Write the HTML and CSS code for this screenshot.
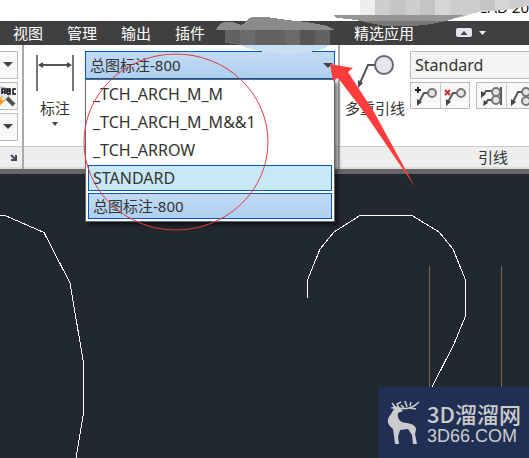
FILE: index.html
```html
<!DOCTYPE html>
<html lang="zh-CN">
<head>
<meta charset="utf-8">
<title>CAD</title>
<link rel="stylesheet" href="styles.css">
</head>
<body>
<div class="app">
  <header class="titlebar"><span>TCAD 20</span></header>
  <nav class="menubar">
    <a href="#">视图</a><a href="#">管理</a><a href="#">输出</a><a href="#">插件</a>
    <a href="#" class="featured">精选应用</a>
    <button class="collapse" aria-label="折叠功能区"><svg width="32" height="12" viewBox="0 0 32 12"><rect x="1" y="1" width="16" height="9" rx="2" fill="#e2e2ea"/><path d="M5.500 8 9 4l3.500 4z" fill="#444"/><path d="M24 4h7l-3.500 4z" fill="#e8eaf2"/></svg></button>
  </nav>
  <main class="ribbon">
    <section class="panel text-panel">
      <div class="panel-body">
        <button class="cell" aria-label="文字样式"><svg width="10" height="6"><path d="M0 0h10L5 5z" fill="#444"/></svg></button>
        <button class="cell" aria-label="查找文字"><svg width="19" height="26" viewBox="0 0 19 26"><circle cx="4" cy="11" r="7" fill="#dce8ec" stroke="#9aabad"/><path d="m9 15 7 7" stroke="#555" stroke-width="4"/><path d="M0 17 5 12 3 17h4l-7 8" fill="#ff9d18"/><path d="M4 11V6h3v5M4 9h3M9 11V6h3v5H9m0-3h3M18 6h-3v5h3" fill="none" stroke="#111" stroke-width="1.500"/></svg></button>
        <button class="cell" aria-label="文字高度"><svg width="10" height="6"><path d="M0 0h10L5 5z" fill="#444"/></svg></button>
      </div>
      <footer><svg width="7" height="7"><path d="m1 1 4 4M6 1v5H1" fill="none" stroke="#454b56" stroke-width="2"/></svg></footer>
    </section>
    <section class="panel dimension-panel">
      <div class="panel-body">
        <button class="large-tool"><svg width="40" height="42" viewBox="0 0 40 42"><path d="M2 1v36M38 1v36" stroke="#777" stroke-width="2"/><path d="M5 11h30" stroke="#555" stroke-width="2"/><path d="M3 11l5-3v6zM37 11l-5-3v6z" fill="#444a50"/></svg><span>标注</span><svg width="6" height="4"><path d="M0 0h6L3 4z" fill="#444"/></svg></button>
        <div class="combo">
          <select aria-label="标注样式"><option>总图标注-800</option></select>
          <svg class="caret" width="10" height="6"><path d="M0 0h10L5 5z" fill="#444"/></svg>
          <ul class="choices" role="listbox" aria-label="标注样式">
            <li role="option">_TCH_ARCH_M_M</li>
            <li role="option">_TCH_ARCH_M_M&amp;&amp;1</li>
            <li role="option">_TCH_ARROW</li>
            <li role="option" class="hover">STANDARD</li>
            <li role="option" class="selected" aria-selected="true">总图标注-800</li>
          </ul>
        </div>
      </div>
      <footer></footer>
    </section>
    <section class="panel leader-panel">
      <div class="panel-body">
        <button class="large-tool"><svg width="40" height="42" viewBox="0 0 40 42"><path d="M20 11h-7L5 29" fill="none" stroke="#555" stroke-width="2"/><path d="m3 34 0-8 5 3z" fill="#444a50"/><circle cx="29" cy="11" r="9" fill="#e4e6ea" stroke="#666" stroke-width="2"/></svg><span>多重引线</span></button>
        <div class="leader-tools">
          <select aria-label="多重引线样式"><option>Standard</option></select>
          <div class="tool-row">
            <div class="pair">
              <button aria-label="添加引线"><svg width="24" height="22" viewBox="0 0 24 22"><path d="M14 8h-4L5 17" fill="none" stroke="#555" stroke-width="2"/><path d="m3 21 0-7 5 3z" fill="#444"/><circle cx="18" cy="8" r="4" fill="#e4e6ea" stroke="#777" stroke-width="2"/><path d="M1 5h6M4 2v6" stroke="#222" stroke-width="2"/></svg></button>
              <button aria-label="删除引线"><svg width="24" height="22" viewBox="0 0 24 22"><path d="M14 8h-4L5 17" fill="none" stroke="#555" stroke-width="2"/><path d="m3 21 0-7 5 3z" fill="#444"/><circle cx="18" cy="8" r="4" fill="#e4e6ea" stroke="#777" stroke-width="2"/><path d="m2 5 5 5m0-5-5 5" stroke="#d22d35" stroke-width="2"/></svg></button>
            </div>
            <div class="pair">
              <button aria-label="对齐"><svg width="24" height="22" viewBox="0 0 24 22"><path d="M12 6H6L3 10m9 5H8l-3 4M21 2v18" fill="none" stroke="#555" stroke-width="2"/><path d="m1 13 0-7 5 3zM3 21l1-6 4 3z" fill="#444"/><circle cx="16" cy="7" r="4" fill="#e4e6ea" stroke="#777" stroke-width="2"/><circle cx="16" cy="15" r="4" fill="#e4e6ea" stroke="#777" stroke-width="2"/></svg></button>
              <button aria-label="合并"><svg width="24" height="22" viewBox="0 0 24 22"><path d="M13 7H9L4 17" fill="none" stroke="#555" stroke-width="2"/><path d="m2 21 0-7 5 3z" fill="#444"/><circle cx="17" cy="7" r="4" fill="#e4e6ea" stroke="#777" stroke-width="2"/><circle cx="17" cy="16" r="4" fill="#e4e6ea" stroke="#777" stroke-width="2"/></svg></button>
            </div>
          </div>
        </div>
      </div>
      <footer>引线</footer>
    </section>
  </main>
  <div class="drawing">
    <svg class="lines" width="529" height="284" viewBox="0 174 529 284" shape-rendering="crispEdges"><g fill="none" stroke="#fff"><path d="M0 215.500h5L44 232.500 70 283 83.500 363v50L76 458M307.500 298v-18L320 249l14-17 26-16.500h52L439 232l14 17 12.500 31v36L454 344l-22 43"/><path d="M429.500 266v122M501.500 266v122" stroke="#81654f"/></g></svg>
  </div>
  <aside class="watermark">
    <svg width="34" height="46" viewBox="0 0 34 46"><path d="M3 8l5-2 4 1 4 4-5 2c-1 7 3 10 9 10 6 1 9 3 9 7l-1 4 2 10h-4l-1-9-4-6-8 1-2 7 1 7H8l-1-8-1-7c-6-5-7-9-2-15l3-5z" fill="#ccc"/><path d="m8 7-3-4M12 8l-2-4 4-2m-2 6c8 2 14 0 20-6M17 8l-3-3m6 2-2-6m5 5 1-4m-1 6 6 1" fill="none" stroke="#ccc" stroke-width="1.500"/></svg>
    <div class="brand"><strong>3D溜溜网</strong><span>3D66.COM</span></div>
  </aside>
  <svg class="marks" width="529" height="458" viewBox="0 0 529 458">
    <g shape-rendering="crispEdges">
      <path d="M360 0h15v15h-15z" fill="#eee"/>
      <path d="M375 0h154v5l-6 2-18 3-17 1-15 2-10 4-9 1h-79z" fill="#cdcdcd"/>
      <path d="M390 0h15v17h-15zM420 0h15v17h-15zM480 0h15v10h-15z" fill="#c4c4c4"/>
      <path d="M435 0h15v17h-15zM495 0h15v9h-15z" fill="#d6d6d6"/>
      <path d="M334 15h130l-8 3-10 3-14 3-17 2h-30l-11-2-13-3-12-2-13-1z" fill="#959595"/>
      <path d="M361 21h85l-14 3-17 2h-30l-11-2z" fill="#777"/>
      <path d="M216 30l3-5 5-3h8l9 3 4-2 3-4 4-2h15l20 3 20 2 20 4 8 4z" fill="#8b8b8b"/>
      <path d="M225 30h105v15H240l-15-2z" fill="#626262"/>
      <path d="M240 30h15v15h-15zM285 30h15v15h-15z" fill="#6b6b6b"/>
      <path d="M300 30h15v15h-15z" fill="#555"/>
      <path d="M240 45h90l-7 4-13 3-23 2-22-2-15-3z" fill="#cbdff3"/>
    </g>
    <ellipse cx="176" cy="142" rx="92" ry="88" fill="none" stroke="#e6393e"/>
    <path d="m330 64 3 17 5-3 26 34 51 75-41-75-26-40 5-4z" fill="#ff3c3c"/>
  </svg>
</div>
</body>
</html>
```
FILE: styles.css
```css
* { box-sizing: border-box; }
body { margin: 0; font: 15px/20px "Noto Sans", "Noto Sans CJK SC", sans-serif; color: #333; }
button, select { font: inherit; color: inherit; border: 0; padding: 0; background: none; }
a { color: #fff; text-decoration: none; }
svg { display: block; flex: none; }
.app { position: relative; min-height: 100vh; overflow: hidden; display: flex; flex-direction: column; background: #212830; }
.titlebar { height: 21px; background: #fff; display: flex; justify-content: flex-end; align-items: flex-start; line-height: 14px; color: #111; overflow: hidden; }
.menubar { height: 24px; background: #404040; display: flex; align-items: center; gap: 24px; padding-left: 13px; white-space: nowrap; }
.menubar .featured { margin-left: 125px; }
.collapse { margin-left: 17px; }
.ribbon { height: 129px; display: flex; background: #fff; border-bottom: 5px solid #666; }
.panel { display: flex; flex-direction: column; border-right: 2px solid #aaa; flex: none; }
.panel-body { flex: 1; display: flex; }
.panel footer { height: 23px; background: #eee; border-top: 1px solid #ccc; border-bottom: 2px solid #ddd; display: flex; align-items: center; justify-content: center; }
.text-panel { width: 24px; }
.text-panel .panel-body { flex-direction: column; gap: 3px; padding: 6px 4px 0 0; }
.text-panel footer { justify-content: flex-end; padding-right: 5px; }
.cell { height: 28px; border: 1px solid #bbb; border-left: 0; background: #f8f8f8; display: flex; align-items: center; justify-content: flex-end; padding-right: 4px; overflow: hidden; }
.cell:nth-child(2) { padding-right: 0; }
.dimension-panel { width: 316px; }
.large-tool { display: flex; flex-direction: column; align-items: center; padding-top: 9px; width: 62px; }
.large-tool span { margin: 2px 0 4px; white-space: nowrap; }
.combo { position: relative; align-self: flex-start; flex: 1; margin: 6px 3px 0 -1px; }
.combo select { appearance: none; display: block; width: 100%; height: 28px; padding: 0 4px; background: linear-gradient(#c1daf3, #aed0f0); border: 1px solid #005bb8; border-radius: 0; }
.caret { position: absolute; right: 2px; top: 12px; }
.choices { position: absolute; z-index: 2; top: 28px; left: 0; right: 0; margin: 0; padding: 1px 2px 2px; list-style: none; background: #fff; border: 1px solid #666; box-shadow: 3px 3px 4px #0008; display: flex; flex-direction: column; gap: 2px; font-size: 16px; }
.choices li { height: 26px; line-height: 24px; padding: 0 4px; border: 1px solid transparent; }
.choices .hover { background: #c8e8f8; border-color: #005bb8; }
.choices .selected { background: linear-gradient(#c1daf3, #aed0f0); border-color: #005bb8; font-size: 15px; }
.leader-panel { flex: 1 0 306px; border: 0; }
.leader-panel .large-tool { width: 70px; }
.leader-tools { flex: 1; min-width: 0; padding-top: 6px; }
.leader-tools select { appearance: none; display: block; width: 100%; height: 28px; padding: 0 4px; border: 1px solid #bbb; border-right: 0; border-radius: 0; background: #f4f4f4; font-size: 16px; }
.tool-row { display: flex; gap: 6px; padding-top: 3px; }
.pair { display: flex; flex: none; border: 1px solid #bbb; background: #f8f8f8; }
.pair button { width: 29px; height: 25px; display: flex; align-items: center; justify-content: center; }
.pair button + button { border-left: 1px solid #ccc; }
.drawing { flex: 1; }
.watermark { position: absolute; right: 0; bottom: 0; width: 150px; height: 71px; background: #222f54; color: #ccc; display: flex; align-items: center; gap: 6px; padding-left: 8px; }
.brand { display: flex; flex-direction: column; white-space: nowrap; }
.brand strong { font: 500 22px/26px "Noto Sans CJK SC", sans-serif; }
.brand span { font: 18px/20px "Liberation Sans", sans-serif; }
.marks { position: absolute; z-index: 3; left: 0; top: 0; pointer-events: none; }
```
